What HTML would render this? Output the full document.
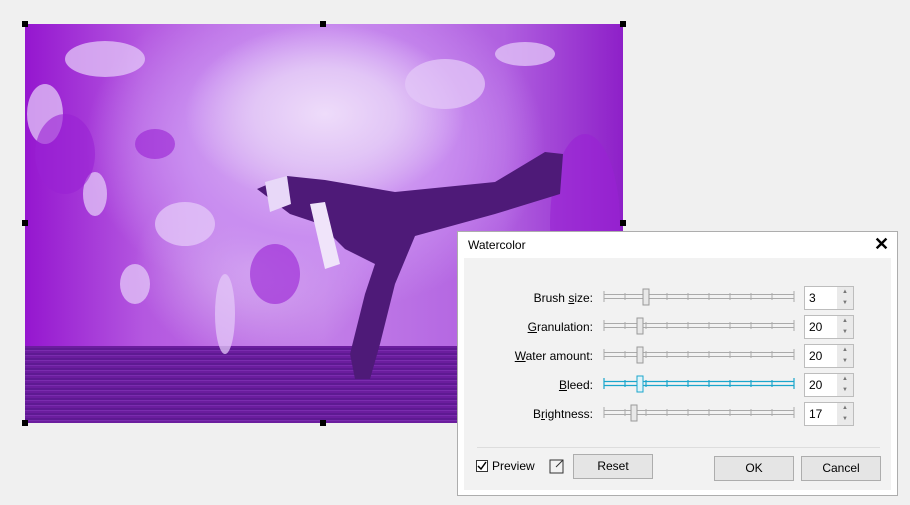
<!DOCTYPE html>
<html><head><style>
body{margin:0;width:910px;height:505px;background:#f0f0f0;position:relative;overflow:hidden;font-family:"Liberation Sans",sans-serif;font-size:12px;color:#000}
.img{position:absolute;left:25px;top:24px;width:598px;height:399px;overflow:hidden;
background:
radial-gradient(ellipse 140px 90px at 300px 90px,#eedcfa 0%,#e2c6f6 50%,rgba(220,180,245,0) 100%),
radial-gradient(ellipse 230px 170px at 290px 120px,#dcb8f4 0%,#c98ef0 55%,rgba(190,110,235,0) 100%),
radial-gradient(ellipse 120px 100px at 230px 240px,#d8b0f2 0%,rgba(200,140,240,0) 100%),
linear-gradient(90deg,#9516cf 0%,#b458e0 20%,#c27ee8 50%,#b060e0 80%,#8e20c8 100%);}
.floor{position:absolute;left:0;top:322px;width:598px;height:77px;background:repeating-linear-gradient(0deg,#6b1d9e 0 2px,#7a2cae 2px 3px,#5e1a92 3px 5px)}
.h{position:absolute;width:6px;height:6px;background:#000}
.dlg{position:absolute;left:457px;top:231px;width:439px;height:263px;background:#fff;border:1px solid #adadad}
.panel{position:absolute;left:6px;top:26px;width:427px;height:232px;background:#f2f2f2}
.title{position:absolute;left:10px;top:6px;font-size:12px}
.x{position:absolute;left:416px;top:2px;font-size:18px;font-weight:bold}
.lbl{position:absolute;right:304px;width:150px;text-align:right;font-size:12px}
.spin{position:absolute;left:346px;width:48px;height:22px;border:1px solid #bdbdbd;background:#fff}
.spin span{position:absolute;left:4px;top:4px}
.spin i{position:absolute;right:0;top:0;width:16px;height:22px;background:#eaeaea;font-style:normal;font-size:6px;color:#777;text-align:center;line-height:11px}
.btn{position:absolute;height:23px;border:1px solid #adadad;background:#e5e5e5;text-align:center;line-height:23px}
</style></head><body>
<div class="img">
<div class="floor"></div>
<svg width="598" height="399" style="position:absolute;left:0;top:0">
<g fill="#e4c8f8" opacity=".75">
<ellipse cx="80" cy="35" rx="40" ry="18"/>
<ellipse cx="20" cy="90" rx="18" ry="30"/>
<ellipse cx="160" cy="200" rx="30" ry="22"/>
<ellipse cx="70" cy="170" rx="12" ry="22"/>
<ellipse cx="110" cy="260" rx="15" ry="20"/>
<ellipse cx="200" cy="290" rx="10" ry="40"/>
<ellipse cx="420" cy="60" rx="40" ry="25"/>
<ellipse cx="500" cy="30" rx="30" ry="12"/>
</g>
<g fill="#9a22d4" opacity=".6">
<ellipse cx="40" cy="130" rx="30" ry="40"/>
<ellipse cx="250" cy="250" rx="25" ry="30"/>
<ellipse cx="560" cy="200" rx="35" ry="90"/>
<ellipse cx="130" cy="120" rx="20" ry="15"/>
</g>
<path d="M232 165 L262 152 L300 156 L370 168 L470 158 L520 128 L538 130 L535 170 L470 190 L390 212 L370 260 L355 320 L345 355 L330 355 L325 330 L340 270 L350 240 L320 225 L295 200 L265 190 Z" fill="#4e1a78"/>
<path d="M240 158 L262 152 L266 180 L245 188 Z" fill="#e8d8f8"/>
<path d="M285 180 L300 178 L315 240 L300 245 Z" fill="#f0e4fa"/>
</svg>
</div>
<div class="h" style="left:22px;top:21px"></div><div class="h" style="left:320px;top:21px"></div><div class="h" style="left:620px;top:21px"></div>
<div class="h" style="left:22px;top:220px"></div><div class="h" style="left:620px;top:220px"></div>
<div class="h" style="left:22px;top:420px"></div><div class="h" style="left:320px;top:420px"></div>

<div class="dlg">
<div class="panel"></div>
<div class="title">Watercolor</div>
<div class="x">✕</div>
<svg width="439" height="263" style="position:absolute;left:0;top:0">
<g stroke="#aaa" stroke-width="1" fill="none">
<g id="t1"><path d="M146 62.5H336M146 66.5H336M146 59v11M336 59v11M167 61v7M188 61v7M209 61v7M230 61v7M251 61v7M272 61v7M293 61v7M314 61v7"/></g>
<use href="#t1" y="29"/><use href="#t1" y="58"/><use href="#t1" y="116"/>
</g>
<g stroke="#1ba6cc" stroke-width="1.2"><path d="M146 149.5H336M146 153.5H336M146 146v11M336 146v11M167 148v7M188 148v7M209 148v7M230 148v7M251 148v7M272 148v7M293 148v7M314 148v7"/></g>
<rect x="185" y="57" width="6" height="16" fill="#e8e8e8" stroke="#999"/>
<rect x="179" y="86" width="6" height="16" fill="#e8e8e8" stroke="#999"/>
<rect x="179" y="115" width="6" height="16" fill="#e8e8e8" stroke="#999"/>
<rect x="179" y="144" width="6" height="16" fill="#e0f4fa" stroke="#1ba6cc"/>
<rect x="173" y="173" width="6" height="16" fill="#e8e8e8" stroke="#999"/>
<path d="M19 215.5H422" stroke="#ddd"/>
<rect x="18.5" y="228.5" width="11" height="11" fill="#fff" stroke="#333"/>
<path d="M20 234l3 3 5-7" stroke="#000" stroke-width="1.5" fill="none"/>
<path d="M100 228H92v13h13v-8M98 235l7-7M100 228h5v5" stroke="#333" fill="none"/>
</svg>
<div class="lbl" style="top:59px">Brush <u>s</u>ize:</div>
<div class="lbl" style="top:88px"><u>G</u>ranulation:</div>
<div class="lbl" style="top:117px"><u>W</u>ater amount:</div>
<div class="lbl" style="top:146px"><u>B</u>leed:</div>
<div class="lbl" style="top:175px">B<u>r</u>ightness:</div>
<div class="spin" style="top:54px"><span>3</span><i>▲<br>▼</i></div>
<div class="spin" style="top:83px"><span>20</span><i>▲<br>▼</i></div>
<div class="spin" style="top:112px"><span>20</span><i>▲<br>▼</i></div>
<div class="spin" style="top:141px"><span>20</span><i>▲<br>▼</i></div>
<div class="spin" style="top:170px"><span>17</span><i>▲<br>▼</i></div>
<div style="position:absolute;left:34px;top:227px">Preview</div>
<div class="btn" style="left:115px;top:222px;width:78px">Reset</div>
<div class="btn" style="left:256px;top:224px;width:78px">OK</div>
<div class="btn" style="left:343px;top:224px;width:78px">Cancel</div>
</div>
</body></html>
